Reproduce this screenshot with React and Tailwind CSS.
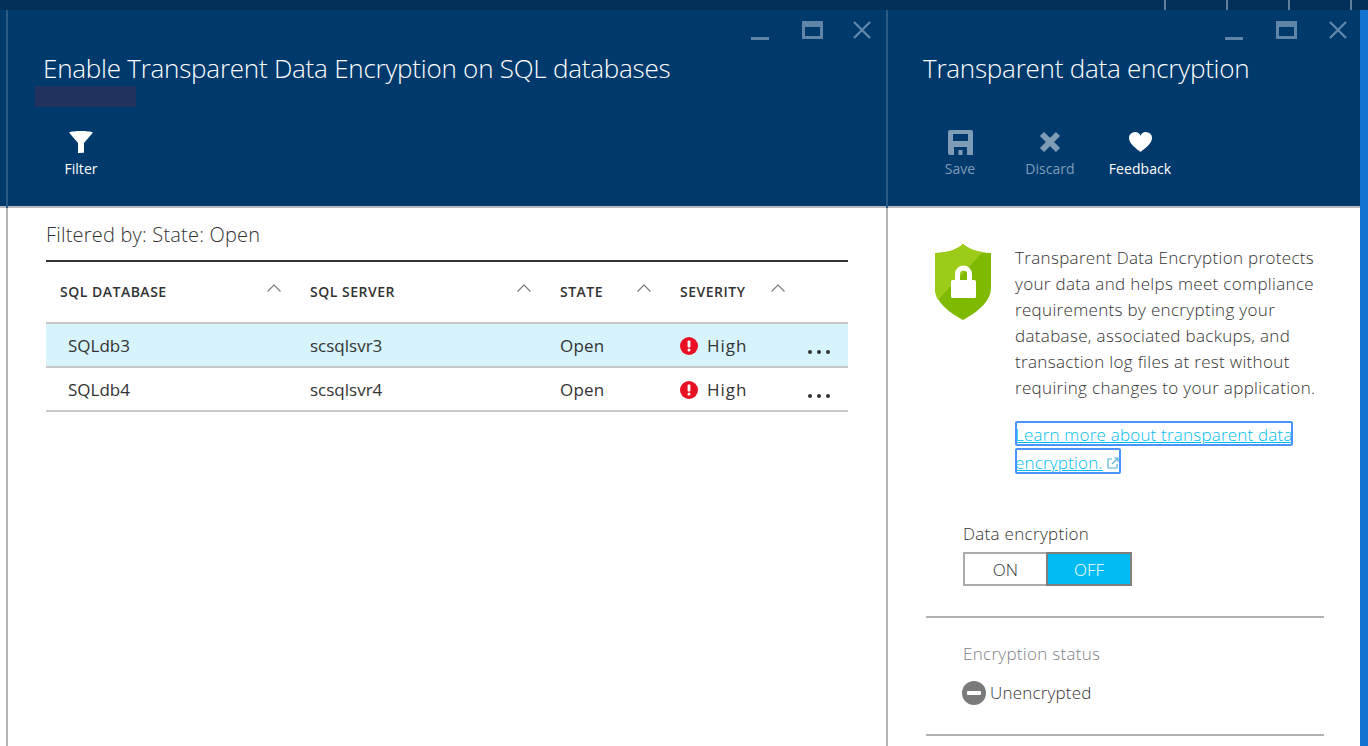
import React from 'react'

const font = { fontFamily: '"Open Sans", "Noto Sans", sans-serif' }

function WindowControls({ className, closeClass }) {
  return (
    <div className={`flex h-[32px] items-start ${className}`}>
      <svg width="18" height="18" viewBox="0 0 18 18" className="mt-[12px]"><rect x="0" y="15" width="18" height="3" fill="#5f86a8" /></svg>
      <svg width="21" height="18" viewBox="0 0 21 18" className="ml-[33px] mt-[11px]"><path d="M0 0h21v18H0z M3 6v9h15V6z" fill="#5f86a8" fillRule="evenodd" /></svg>
      <svg width="18" height="18" viewBox="0 0 18 18" className={`mt-[11px] ${closeClass}`}><path d="M1 1l16 16M17 1L1 17" stroke="#5f86a8" strokeWidth="2.4" /></svg>
    </div>
  )
}

function ToolButton({ icon, label, dim }) {
  return (
    <div className={`flex w-[90px] flex-col items-center ${dim ? 'text-[#7f9cb6]' : 'font-medium text-white'}`}>
      <div className="mt-[1px] flex h-[26px] items-center justify-center">{icon}</div>
      <span className="mt-[4px] text-[14px] leading-[20px] tracking-[0.05px]">{label}</span>
    </div>
  )
}

function BladeHeader({ title, children, controlsClass, closeClass }) {
  return (
    <header className="flex h-[198px] shrink-0 flex-col border-b-2 border-[#b9bbbd] bg-[#003a6c]">
      <WindowControls className={controlsClass} closeClass={closeClass} />
      <h1 className="mt-[10px] h-[32px] pl-[35px] text-[26px] font-light leading-[32px] tracking-[-0.23px] whitespace-nowrap text-white">{title}</h1>
      {children}
    </header>
  )
}

const FilterIcon = (
  <svg width="24" height="22" viewBox="0 0 24 22"><path d="M0 1.500C4 -.5 20 -.5 24 1.500L15 12v9.500c0 .5-6 .5-6 0V12z" fill="#fff" /></svg>
)
const SaveIcon = (
  <svg width="25" height="25" viewBox="0 0 25 25"><path fillRule="evenodd" d="M2 0h21a2 2 0 0 1 2 2v23h-6v-8H6v8H2a2 2 0 0 1-2-2V2a2 2 0 0 1 2-2zM5 4v7h15V4zM10.500 20h4v5h-4z" fill="#7f9cb6" /></svg>
)
const DiscardIcon = (
  <svg width="22" height="22" viewBox="0 0 22 22"><path d="M3 3l16 16M19 3L3 19" stroke="#7f9cb6" strokeWidth="6" /></svg>
)
const HeartIcon = (
  <svg width="23" height="20" viewBox="0 0 23 20"><path d="M11.500 20C8 17 0 12 0 6a6 6 0 0 1 11.500-2.300A6 6 0 0 1 23 6c0 6-8 11-11.500 14z" fill="#fff" /></svg>
)

function SortArrow({ className }) {
  return (
    <svg width="14" height="8" viewBox="0 0 14 8" className={className}><path d="M.5 7.500L7 1l6.500 6.500" fill="none" stroke="#777" strokeWidth="1.100" /></svg>
  )
}

function HeadCell({ label, arrowClass, className }) {
  return (
    <div className={`relative flex items-center pb-[2px] text-[14px] font-semibold tracking-[0.5px] text-[#333] ${className}`}>
      <span>{label}</span>
      <SortArrow className={arrowClass} />
    </div>
  )
}

function AlertIcon() {
  return (
    <svg width="18" height="18" viewBox="0 0 18 18"><circle cx="9" cy="9" r="9" fill="#e81123" /><rect x="7.600" y="3.500" width="2.800" height="7" rx="1" fill="#fff" /><circle cx="9" cy="13" r="1.500" fill="#fff" /></svg>
  )
}

function Row({ name, server, selected }) {
  return (
    <div className={`grid h-[44px] grid-cols-[250px_250px_120px_182px] items-center border-b-2 border-[#c8c8c8] pt-[2px] text-[17px] text-[#333] ${selected ? 'bg-[#d7f4fd]' : ''}`}>
      <div className="pl-[22px]">{name}</div>
      <div className="pl-[14px]">{server}</div>
      <div className="pl-[14px] tracking-[0.2px]">Open</div>
      <div className="flex items-center pl-[14px]">
        <AlertIcon />
        <span className="ml-[9px] tracking-[1px]">High</span>
        <span className="ml-auto mr-[18px] mt-[12px] flex gap-[5px]">
          <i className="h-[4px] w-[4px] rounded-full bg-[#333]" />
          <i className="h-[4px] w-[4px] rounded-full bg-[#333]" />
          <i className="h-[4px] w-[4px] rounded-full bg-[#333]" />
        </span>
      </div>
    </div>
  )
}

export default function App() {
  return (
    <div className="flex h-[746px] w-[1368px] flex-col overflow-hidden bg-white" style={font}>
      <div className="flex h-[10px] shrink-0 justify-end bg-[#012f58] pr-[16px]">
        <div className="flex gap-[60px]">
          <i className="w-[2px] bg-[#5f7f9c]" />
          <i className="w-[2px] bg-[#5f7f9c]" />
          <i className="w-[2px] bg-[#5f7f9c]" />
          <i className="w-[2px] bg-[#5f7f9c]" />
        </div>
      </div>

      <div className="flex min-h-0 flex-1">
        <div className="w-[6px] shrink-0">
          <div className="h-[198px] border-b-2 border-[#b9bbbd] bg-[#003a6c]" />
        </div>

        {/* main blade */}
        <section className="flex w-[880px] shrink-0 flex-col border-l-2 border-[#2b5b85]">
          <BladeHeader title="Enable Transparent Data Encryption on SQL databases" controlsClass="pl-[743px]" closeClass="ml-[30px]">
            <div className="ml-[27px] mt-[2px] h-[21px] w-[101px] bg-[#21325e]" />
            <div className="ml-[28px] mt-[21px] flex">
              <ToolButton icon={FilterIcon} label="Filter" />
            </div>
          </BladeHeader>
          <div className="-ml-[2px] flex-1 border-l-2 border-[#b4b4b4] pl-[38px]">
            <p className="mt-[12px] text-[20px] font-light leading-[30px] tracking-[0.2px] text-[#333]">Filtered by: State: Open</p>
            <div className="mt-[10px] w-[802px] border-t-2 border-[#333]">
              <div className="grid h-[62px] grid-cols-[250px_250px_120px_182px] border-b-2 border-[#c8c8c8]">
                <HeadCell label="SQL DATABASE" className="pl-[14px]" arrowClass="absolute left-[221px] top-[22px]" />
                <HeadCell label="SQL SERVER" className="pl-[14px]" arrowClass="absolute left-[221px] top-[22px]" />
                <HeadCell label="STATE" className="pl-[14px]" arrowClass="absolute left-[91px] top-[22px]" />
                <HeadCell label="SEVERITY" className="pl-[14px]" arrowClass="absolute left-[105px] top-[22px]" />
              </div>
              <Row name="SQLdb3" server="scsqlsvr3" selected />
              <Row name="SQLdb4" server="scsqlsvr4" />
            </div>
          </div>
        </section>

        {/* encryption blade */}
        <section className="flex w-[474px] shrink-0 flex-col border-l-2 border-[#2b5b85]">
          <BladeHeader title="Transparent data encryption" controlsClass="pl-[337px]" closeClass="ml-[32px]">
            <div className="ml-[27px] mt-[44px] flex">
              <ToolButton icon={SaveIcon} label="Save" dim />
              <ToolButton icon={DiscardIcon} label="Discard" dim />
              <ToolButton icon={HeartIcon} label="Feedback" />
            </div>
          </BladeHeader>
          <div className="-ml-[2px] flex-1 border-l-2 border-[#b4b4b4] pl-[38px]">
            <div className="mt-[36px] flex">
              <svg width="56" height="76" viewBox="0 0 56 76" className="ml-[9px] shrink-0">
                <path d="M28 0c5 5 15 9 28 9v35c0 13-13 24-28 32C13 68 0 57 0 44V9c13 0 23-4 28-9z" fill="#7fba00" />
                <path d="M28 0C23 5 13 9 0 9v35c0 5 1 8 3 12L48 8c-8-1-15-4-20-8z" fill="#9ccb1a" />
                <path d="M20 37V30a8.500 8.500 0 0 1 17 0v7h-5v-7a3.500 3.500 0 0 0-7 0v7z" fill="#fff" />
                <rect x="16" y="36" width="25" height="18" rx="1.500" fill="#fff" />
              </svg>
              <div className="ml-[24px] w-[310px] pt-[1px]">
                <p className="text-[17px] font-light leading-[26px] tracking-[0.33px] whitespace-nowrap text-[#333]">
                  Transparent Data Encryption protects<br />
                  your data and helps meet compliance<br />
                  requirements by encrypting your<br />
                  database, associated backups, and<br />
                  transaction log files at rest without<br />
                  requiring changes to your application.
                </p>
                <div className="mt-[20px] text-[17px] font-light tracking-[0.2px] whitespace-nowrap text-[#00bcf2]">
                  <a className="block h-[25px] w-[278px] rounded-[2px] leading-[28px] underline outline-2 -outline-offset-2 outline-[#4a94ff]">Learn more about transparent data</a>
                  <a className="mt-[2px] flex h-[26px] w-[106px] items-center rounded-[2px] pt-[3px] outline-2 -outline-offset-2 outline-[#4a94ff]">
                    <span className="underline">encryption.</span>
                    <svg width="12" height="12" viewBox="0 0 12 12" className="ml-[4px] mt-[1px]"><path d="M5 2H1v9h9V7M7 1h4v4M11 1L5 7" fill="none" stroke="#59b4d9" strokeWidth="1.200" /></svg>
                  </a>
                </div>
              </div>
            </div>

            <div className="ml-[37px] mt-[48px] text-[17px] font-light leading-[24px] tracking-[0.3px] text-[#333]">Data encryption</div>
            <div className="ml-[37px] mt-[6px] flex h-[34px] w-[169px] text-[17px] leading-none">
              <div className="flex w-[83px] items-center justify-center border-2 border-r-0 border-[#ababab] font-light text-[#333]">ON</div>
              <div className="flex w-[86px] items-center justify-center border-2 border-[#7f7f7f] bg-[#00bcf2] font-light text-white">OFF</div>
            </div>

            <div className="mt-[30px] w-[398px] border-t-2 border-[#b0b4b6]" />
            <div className="ml-[37px] mt-[24px] text-[17px] font-light leading-[24px] tracking-[0.3px] text-[#7d8286]">Encryption status</div>
            <div className="ml-[36px] mt-[15px] flex h-[24px] items-center">
              <svg width="24" height="24" viewBox="0 0 24 24"><circle cx="12" cy="12" r="12" fill="#7a7a7a" /><rect x="5" y="10" width="14" height="4" rx="1" fill="#fff" /></svg>
              <span className="ml-[4px] text-[17px] font-light tracking-[0.2px] text-[#333]">Unencrypted</span>
            </div>
            <div className="mt-[29px] w-[398px] border-t-2 border-[#b0b4b6]" />
          </div>
        </section>

        <div className="w-[8px] shrink-0 bg-[#1274cf]" />
      </div>
    </div>
  )
}
